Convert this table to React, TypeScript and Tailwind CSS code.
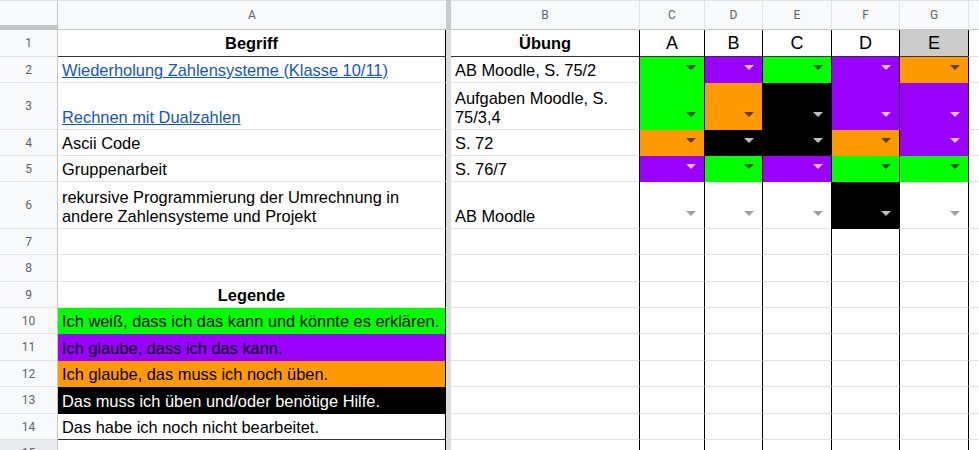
import React from 'react'

type Fill = 'g' | 'p' | 'o' | 'k' | 'w'

const FILL: Record<Fill, string> = {
  g: 'bg-[#00ff00] border-b border-b-transparent',
  p: 'bg-[#9900ff] border-b border-b-transparent',
  o: 'bg-[#ff9900] border-b border-b-transparent',
  k: 'bg-black border-b border-b-transparent',
  w: 'bg-white border-b border-b-[#e2e3e3]',
}

const ARROW: Record<Fill, string> = {
  g: 'text-black/65',
  p: 'text-white/75',
  o: 'text-black/60',
  k: 'text-white/75',
  w: 'text-[#9aa0a6]',
}

const COLW = ['w-[65px]', 'w-[58px]', 'w-[69px]', 'w-[68px]', 'w-[69px]']
const LETTERS = ['C', 'D', 'E', 'F', 'G']

const TEXT = "font-['Liberation_Sans',Arial,sans-serif] text-[16.4px] leading-[19px]"

function RowNum({ n, dim }: { n: number; dim?: boolean }) {
  return (
    <div
      className={`w-[58px] shrink-0 flex items-center justify-center border-r border-r-[#c4c7c5] border-b border-b-[#e2e3e3] font-['Roboto',sans-serif] text-[12px] text-[#5f6368] ${
        dim ? 'bg-[#e8eaed]' : 'bg-[#f8f9fa]'
      }`}
    >
      {n}
    </div>
  )
}

function Freeze() {
  return <div className="w-[5px] shrink-0 bg-[#dadce0]" />
}

function Arrow({ fill }: { fill: Fill }) {
  return (
    <svg
      className={`absolute right-[8px] bottom-[12px] ${ARROW[fill]}`}
      width="10"
      height="5"
      viewBox="0 0 10 5"
    >
      <path d="M0 0H10L5 5Z" fill="currentColor" />
    </svg>
  )
}

function Row({
  n,
  h,
  a,
  aCls = 'bg-white border-b border-b-[#e2e3e3]',
  b,
  fills,
  dim,
}: {
  n: number
  h: string
  a?: React.ReactNode
  aCls?: string
  b?: React.ReactNode
  fills?: Fill[]
  dim?: boolean
}) {
  return (
    <div className={`flex ${h}`}>
      <RowNum n={n} dim={dim} />
      <div className={`w-[388px] shrink-0 flex items-end px-[4px] pb-[2px] border-r border-r-black ${TEXT} ${aCls}`}>
        {a}
      </div>
      <Freeze />
      <div className={`w-[188px] shrink-0 flex items-end px-[4px] pb-[2px] bg-white border-b border-b-[#e2e3e3] text-black ${TEXT}`}>
        {b}
      </div>
      {COLW.map((w, i) => {
        const f: Fill = fills ? fills[i] : 'w'
        return (
          <div key={i} className={`relative shrink-0 border-l border-l-black ${w} ${FILL[f]}`}>
            {fills && <Arrow fill={f} />}
          </div>
        )
      })}
      <div className="flex-1 border-l border-l-black bg-white border-b border-b-[#e2e3e3]" />
    </div>
  )
}

export default function App() {
  return (
    <div className="w-[979px] h-[450px] overflow-hidden bg-white text-black">
      {/* column headers */}
      <div className="flex h-[30px] bg-[#f8f9fa] font-['Roboto',sans-serif] text-[12px] text-[#5f6368]">
        <div className="w-[58px] shrink-0 border-r border-r-[#c4c7c5] border-b-[5px] border-b-[#c4c4c4] border-t border-t-[#e2e3e3]" />
        <div className="w-[388px] shrink-0 flex items-center justify-center border-b border-b-[#c4c7c5] border-t border-t-[#e2e3e3]">
          A
        </div>
        <div className="w-[5px] shrink-0 bg-[#c8cacd]" />
        <div className="w-[188px] shrink-0 flex items-center justify-center border-b border-b-[#c4c7c5] border-t border-t-[#e2e3e3]">
          B
        </div>
        {COLW.map((w, i) => (
          <div
            key={i}
            className={`shrink-0 flex items-center justify-center border-l border-l-[#e2e3e3] border-b border-b-[#c4c7c5] border-t border-t-[#e2e3e3] ${w}`}
          >
            {LETTERS[i]}
          </div>
        ))}
        <div className="flex-1 border-l border-l-[#e2e3e3] border-b border-b-[#c4c7c5] border-t border-t-[#e2e3e3]" />
      </div>

      {/* row 1 */}
      <div className="flex h-[27px]">
        <RowNum n={1} />
        <div className={`w-[388px] shrink-0 flex items-end justify-center pb-[3px] border-r border-r-black border-b border-b-[#333] font-bold ${TEXT}`}>
          Begriff
        </div>
        <Freeze />
        <div className={`w-[188px] shrink-0 flex items-end justify-center pb-[3px] border-b border-b-[#333] font-bold ${TEXT}`}>
          Übung
        </div>
        {['A', 'B', 'C', 'D', 'E'].map((l, i) => (
          <div
            key={l}
            className={`shrink-0 flex items-end justify-center pb-[3px] border-l border-l-black border-b border-b-[#333] font-['Liberation_Sans',Arial,sans-serif] text-[18px] leading-[19px] ${COLW[i]} ${
              i === 4 ? 'bg-[#cccccc]' : 'bg-white'
            }`}
          >
            {l}
          </div>
        ))}
        <div className="flex-1 border-l border-l-black border-b border-b-[#e2e3e3]" />
      </div>

      <Row
        n={2}
        h="h-[26px]"
        a={<span className="text-[#1155cc] underline">Wiederholung Zahlensysteme (Klasse 10/11)</span>}
        b="AB Moodle, S. 75/2"
        fills={['g', 'p', 'g', 'p', 'o']}
      />
      <Row
        n={3}
        h="h-[47px]"
        a={<span className="text-[#1155cc] underline">Rechnen mit Dualzahlen</span>}
        b="Aufgaben Moodle, S. 75/3,4"
        fills={['g', 'o', 'k', 'p', 'p']}
      />
      <Row n={4} h="h-[26px]" a="Ascii Code" b="S. 72" fills={['o', 'k', 'k', 'o', 'p']} />
      <Row n={5} h="h-[26px]" a="Gruppenarbeit" b="S. 76/7" fills={['p', 'g', 'p', 'g', 'g']} />
      <Row
        n={6}
        h="h-[47px]"
        a="rekursive Programmierung der Umrechnung in andere Zahlensysteme und Projekt"
        b="AB Moodle"
        fills={['w', 'w', 'w', 'k', 'w']}
      />
      <Row n={7} h="h-[26px]" />
      <Row n={8} h="h-[27px]" />
      <Row
        n={9}
        h="h-[26px]"
        a={<span className="w-full text-center font-bold">Legende</span>}
      />
      <Row
        n={10}
        h="h-[26px]"
        a="Ich weiß, dass ich das kann und könnte es erklären."
        aCls="bg-[#00ff00] border-b border-b-transparent"
      />
      <Row
        n={11}
        h="h-[27px]"
        a="Ich glaube, dass ich das kann."
        aCls="bg-[#9900ff] border-b border-b-transparent"
      />
      <Row
        n={12}
        h="h-[26px]"
        a="Ich glaube, das muss ich noch üben."
        aCls="bg-[#ff9900] border-b border-b-transparent"
      />
      <Row
        n={13}
        h="h-[27px]"
        a="Das muss ich üben und/oder benötige Hilfe."
        aCls="bg-black text-white border-b border-b-transparent"
      />
      <Row n={14} h="h-[26px]" a="Das habe ich noch nicht bearbeitet." aCls="bg-white border-b border-b-[#333]" />
      <Row n={15} h="h-[26px]" dim />
    </div>
  )
}
